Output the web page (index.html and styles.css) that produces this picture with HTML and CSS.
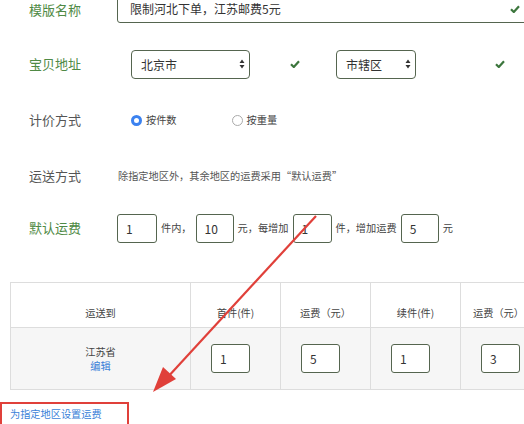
FILE: index.html
```html
<!DOCTYPE html>
<html lang="zh">
<head>
<meta charset="utf-8">
<link rel="stylesheet" href="styles.css">
</head>
<body>
<div class="page">
  <div class="form">
    <div class="row r1">
      <span class="label ok">模版名称</span>
      <div class="field-wrap">
        <div class="input wide">限制河北下单，江苏邮费5元</div>
        <svg class="check abs" viewBox="0 0 10 8"><path d="M1 4.2 L3.8 7 L9 1.2" fill="none" stroke="#3c763d" stroke-width="2.2"/></svg>
      </div>
    </div>
    <div class="row r2">
      <span class="label ok">宝贝地址</span>
      <div class="select s1"><span>北京市</span><svg class="arrows" viewBox="0 0 6 10"><path d="M3 0.5 L5.5 4 L0.5 4Z M3 9.5 L5.5 6 L0.5 6Z" fill="#333"/></svg></div>
      <svg class="check c1" viewBox="0 0 10 8"><path d="M1 4.2 L3.8 7 L9 1.2" fill="none" stroke="#3c763d" stroke-width="2.2"/></svg>
      <div class="select s2"><span>市辖区</span><svg class="arrows" viewBox="0 0 6 10"><path d="M3 0.5 L5.5 4 L0.5 4Z M3 9.5 L5.5 6 L0.5 6Z" fill="#333"/></svg></div>
      <svg class="check c2" viewBox="0 0 10 8"><path d="M1 4.2 L3.8 7 L9 1.2" fill="none" stroke="#3c763d" stroke-width="2.2"/></svg>
    </div>
    <div class="row r3">
      <span class="label muted">计价方式</span>
      <span class="radio checked"></span><span class="small">按件数</span>
      <span class="radio second"></span><span class="small">按重量</span>
    </div>
    <div class="row r4">
      <span class="label muted">运送方式</span>
      <span class="small note">除指定地区外，其余地区的运费采用“默认运费”</span>
    </div>
    <div class="row r5">
      <span class="label ok">默认运费</span>
      <div class="input box w40">1</div><span class="small gap">件内，</span>
      <div class="input box w38">10</div><span class="small gap">元，每增加</span>
      <div class="input box">1</div><span class="small gap">件，增加运费</span>
      <div class="input box w38">5</div><span class="small gap">元</span>
    </div>
  </div>

  <table class="fees">
    <thead>
      <tr>
        <th class="col-area">运送到</th>
        <th class="col-n">首件(件)</th>
        <th class="col-n">运费（元）</th>
        <th class="col-n">续件(件)</th>
        <th class="col-last">运费（元）</th>
      </tr>
    </thead>
    <tbody>
      <tr>
        <td class="area">江苏省<br><a class="link">编辑</a></td>
        <td class="num"><div class="input box">1</div></td>
        <td class="num"><div class="input box">5</div></td>
        <td class="num"><div class="input box">1</div></td>
        <td class="num"><div class="input box">3</div></td>
      </tr>
    </tbody>
  </table>

  <div class="add">
    <span class="add-box"><a class="link">为指定地区设置运费</a></span>
  </div>

  <svg class="arrow" width="524" height="424" viewBox="0 0 524 424">
    <line x1="316" y1="236" x2="166" y2="399" stroke="#e0403a" stroke-width="2.2"/>
    <polygon points="153,412 176,399 163,387" fill="#e0403a"/>
  </svg>
</div>
</body>
</html>
```

FILE: styles.css
```css
html, body {
  margin: 0;
  padding: 0;
  overflow: hidden;
  background: #fff;
}
body {
  font-family: "Noto Sans CJK SC", "Noto Sans", sans-serif;
  color: #444;
  width: 524px;
  height: 424px;
}
.page {
  position: relative;
  width: 524px;
  height: 424px;
}
.form {
  margin-top: -20px;
  display: flex;
  flex-direction: column;
}
.row {
  display: flex;
  align-items: center;
  height: 56px;
  padding-left: 29px;
}
.r1 .label { margin-top: 3px; }
.r5 { height: 48px; }
.label {
  width: 88px;
  flex: none;
  font-size: 13px;
  line-height: 16px;
}
.label.ok { color: #4f8a45; }
.label.muted { color: #555; }
.field-wrap {
  position: relative;
}
.input {
  box-sizing: border-box;
  height: 29px;
  border: 1px solid #55654f;
  border-radius: 3px;
  background: #fff;
  display: flex;
  align-items: center;
  color: #333;
  flex: none;
}
.input.wide {
  width: 430px;
  padding-left: 12px;
  font-size: 12px;
}
.input.box {
  width: 39px;
  padding-left: 8px;
  font-size: 12px;
}
.input.box.w40 { width: 40px; }
.input.box.w38 { width: 38px; }
.check {
  width: 10px;
  height: 8px;
  display: block;
  flex: none;
}
.check.abs {
  position: absolute;
  left: 393px;
  top: 11px;
}
.check.c1 { margin-left: 40px; }
.check.c2 { margin-left: 79px; }
.select {
  box-sizing: border-box;
  height: 29px;
  border: 1px solid #55654f;
  border-radius: 4px;
  display: flex;
  align-items: center;
  justify-content: space-between;
  padding: 0 4px 0 9px;
  font-size: 12px;
  color: #333;
  flex: none;
}
.select.s1 { width: 119px; margin-left: 14px; }
.select.s2 { width: 80px; margin-left: 36px; }
.arrows { width: 6px; height: 10px; display: block; }
.radio {
  box-sizing: border-box;
  width: 11px;
  height: 11px;
  border-radius: 50%;
  border: 1px solid #aaa;
  background: #fff;
  margin-right: 4px;
  flex: none;
}
.radio.checked {
  margin-left: 14px;
  border: 3px solid #3b82f0;
  background: #fff;
}
.radio.second { margin-left: 55px; }
.small {
  font-size: 10.2px;
  line-height: 14px;
  color: #444;
}
.note { margin-left: 1px; color: #555; }
.gap { margin: 0 4px; }

.fees {
  margin: 30px 0 0 10px;
  border-collapse: collapse;
  table-layout: fixed;
  width: 526px;
  font-size: 10.2px;
  color: #444;
}
.fees th, .fees td {
  border: 1px solid #ddd;
  font-weight: normal;
}
.fees th {
  height: 45px;
  box-sizing: border-box;
  vertical-align: bottom;
  padding: 0 0 7px 0;
  text-align: center;
  background: #fff;
}
.col-area { width: 180px; }
.col-n { width: 90px; }
.col-last { width: 76px; }
.fees td {
  height: 62px;
  box-sizing: border-box;
  background: #f6f6f6;
  vertical-align: middle;
}
.fees td.area {
  text-align: center;
  line-height: 14px;
}
.fees td.num {
  padding-left: 20px;
}
.link {
  color: #3a7fd8;
  text-decoration: none;
}
.add {
  margin-top: 12px;
  display: flex;
}
.add-box {
  box-sizing: border-box;
  width: 129px;
  height: 26px;
  border: 2px solid #e0403a;
  padding: 3px 0 0 8px;
  font-size: 10.2px;
  line-height: 14px;
}
.arrow {
  position: absolute;
  left: 0;
  top: 0;
  pointer-events: none;
}
```
